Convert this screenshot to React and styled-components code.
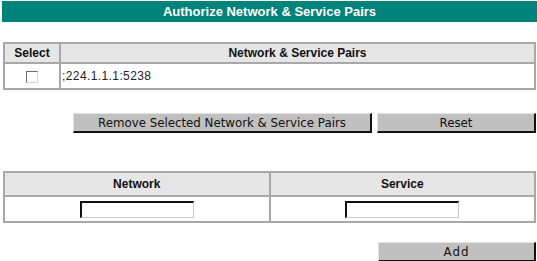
import React from "react";
import styled, { createGlobalStyle } from "styled-components";

const Global = createGlobalStyle`
  html, body { margin: 0; padding: 0; background: #ffffff; }
  body { font-family: "Liberation Sans", Arial, sans-serif; }
`;

const Page = styled.div`
  width: 535px;
  padding: 1px 0 0 2px;
  display: flex;
  flex-direction: column;
`;

const TitleBar = styled.div`
  height: 21px;
  background: #00837b;
  color: #ffffff;
  font: bold 13px "Liberation Sans", Arial, sans-serif;
  display: flex;
  align-items: center;
  justify-content: center;
  margin-bottom: 20px;
`;

const Table = styled.table`
  width: 533px;
  margin-left: 1px;
  border-collapse: collapse;
  border: 2px solid #9a9a9a;
  margin-bottom: ${(p) => p.$after}px;
  table-layout: fixed;
`;

const Th = styled.th`
  height: ${(p) => p.$h}px;
  padding: 0;
  background: #e6e6e6;
  border: 2px solid #a8a8a8;
  font: bold 12px "Liberation Sans", Arial, sans-serif;
  color: #111;
  text-align: center;
  width: ${(p) => (p.$w ? `${p.$w}px` : "auto")};
`;

const Td = styled.td`
  height: ${(p) => p.$h}px;
  padding: ${(p) => (p.$left ? "0 0 0 1px" : "0")};
  border: 2px solid #a8a8a8;
  font: 12px "Liberation Sans", Arial, sans-serif;
  letter-spacing: 0.4px;
  color: #222;
  text-align: ${(p) => (p.$left ? "left" : "center")};
  vertical-align: middle;
`;

const Check = styled.span`
  display: inline-block;
  width: 10px;
  height: 10px;
  border-top: 1px solid #6a6a6a;
  border-left: 1px solid #6a6a6a;
  border-right: 1px solid #d4d4d4;
  border-bottom: 1px solid #d4d4d4;
  background: #fff;
  vertical-align: middle;
`;

const ButtonRow = styled.div`
  display: flex;
  gap: 5px;
  padding-left: ${(p) => p.$indent}px;
  margin-bottom: ${(p) => p.$after}px;
`;

const Button = styled.button`
  width: ${(p) => p.$w}px;
  height: 20px;
  padding: 0;
  background: #c0c0c0;
  border-style: solid;
  border-width: 1px 2px 2px 1px;
  border-color: #e2e2e2 #111 #111 #e2e2e2;
  font: 11.8px "DejaVu Sans", Verdana, sans-serif;
  letter-spacing: ${(p) => (p.$spaced ? "1px" : "0")};
  color: #111;
  cursor: pointer;
`;

const Input = styled.input`
  box-sizing: border-box;
  width: 114px;
  height: 17px;
  padding: 0 2px;
  border-style: solid;
  border-width: 2px 1px 1px 2px;
  border-color: #111 #c8c8c8 #c8c8c8 #111;
  background: #fff;
  vertical-align: middle;
`;

export default function App() {
  return (
    <>
      <Global />
      <Page>
        <TitleBar>Authorize Network &amp; Service Pairs</TitleBar>
        <Table $after={23}>
          <thead>
            <tr>
              <Th $w={54} $h={18}>Select</Th>
              <Th $h={18}>Network &amp; Service Pairs</Th>
            </tr>
          </thead>
          <tbody>
            <tr>
              <Td $h={24}><Check /></Td>
              <Td $h={24} $left>;224.1.1.1:5238</Td>
            </tr>
          </tbody>
        </Table>
        <ButtonRow $indent={71} $after={38}>
          <Button $w={299}>Remove Selected Network &amp; Service Pairs</Button>
          <Button $w={159}>Reset</Button>
        </ButtonRow>
        <Table $after={19}>
          <thead>
            <tr>
              <Th $h={22}>Network</Th>
              <Th $h={22}>Service</Th>
            </tr>
          </thead>
          <tbody>
            <tr>
              <Td $h={24}><Input type="text" /></Td>
              <Td $h={24}><Input type="text" /></Td>
            </tr>
          </tbody>
        </Table>
        <ButtonRow $indent={376} $after={0}>
          <Button $w={158} $spaced>Add</Button>
        </ButtonRow>
      </Page>
    </>
  );
}
